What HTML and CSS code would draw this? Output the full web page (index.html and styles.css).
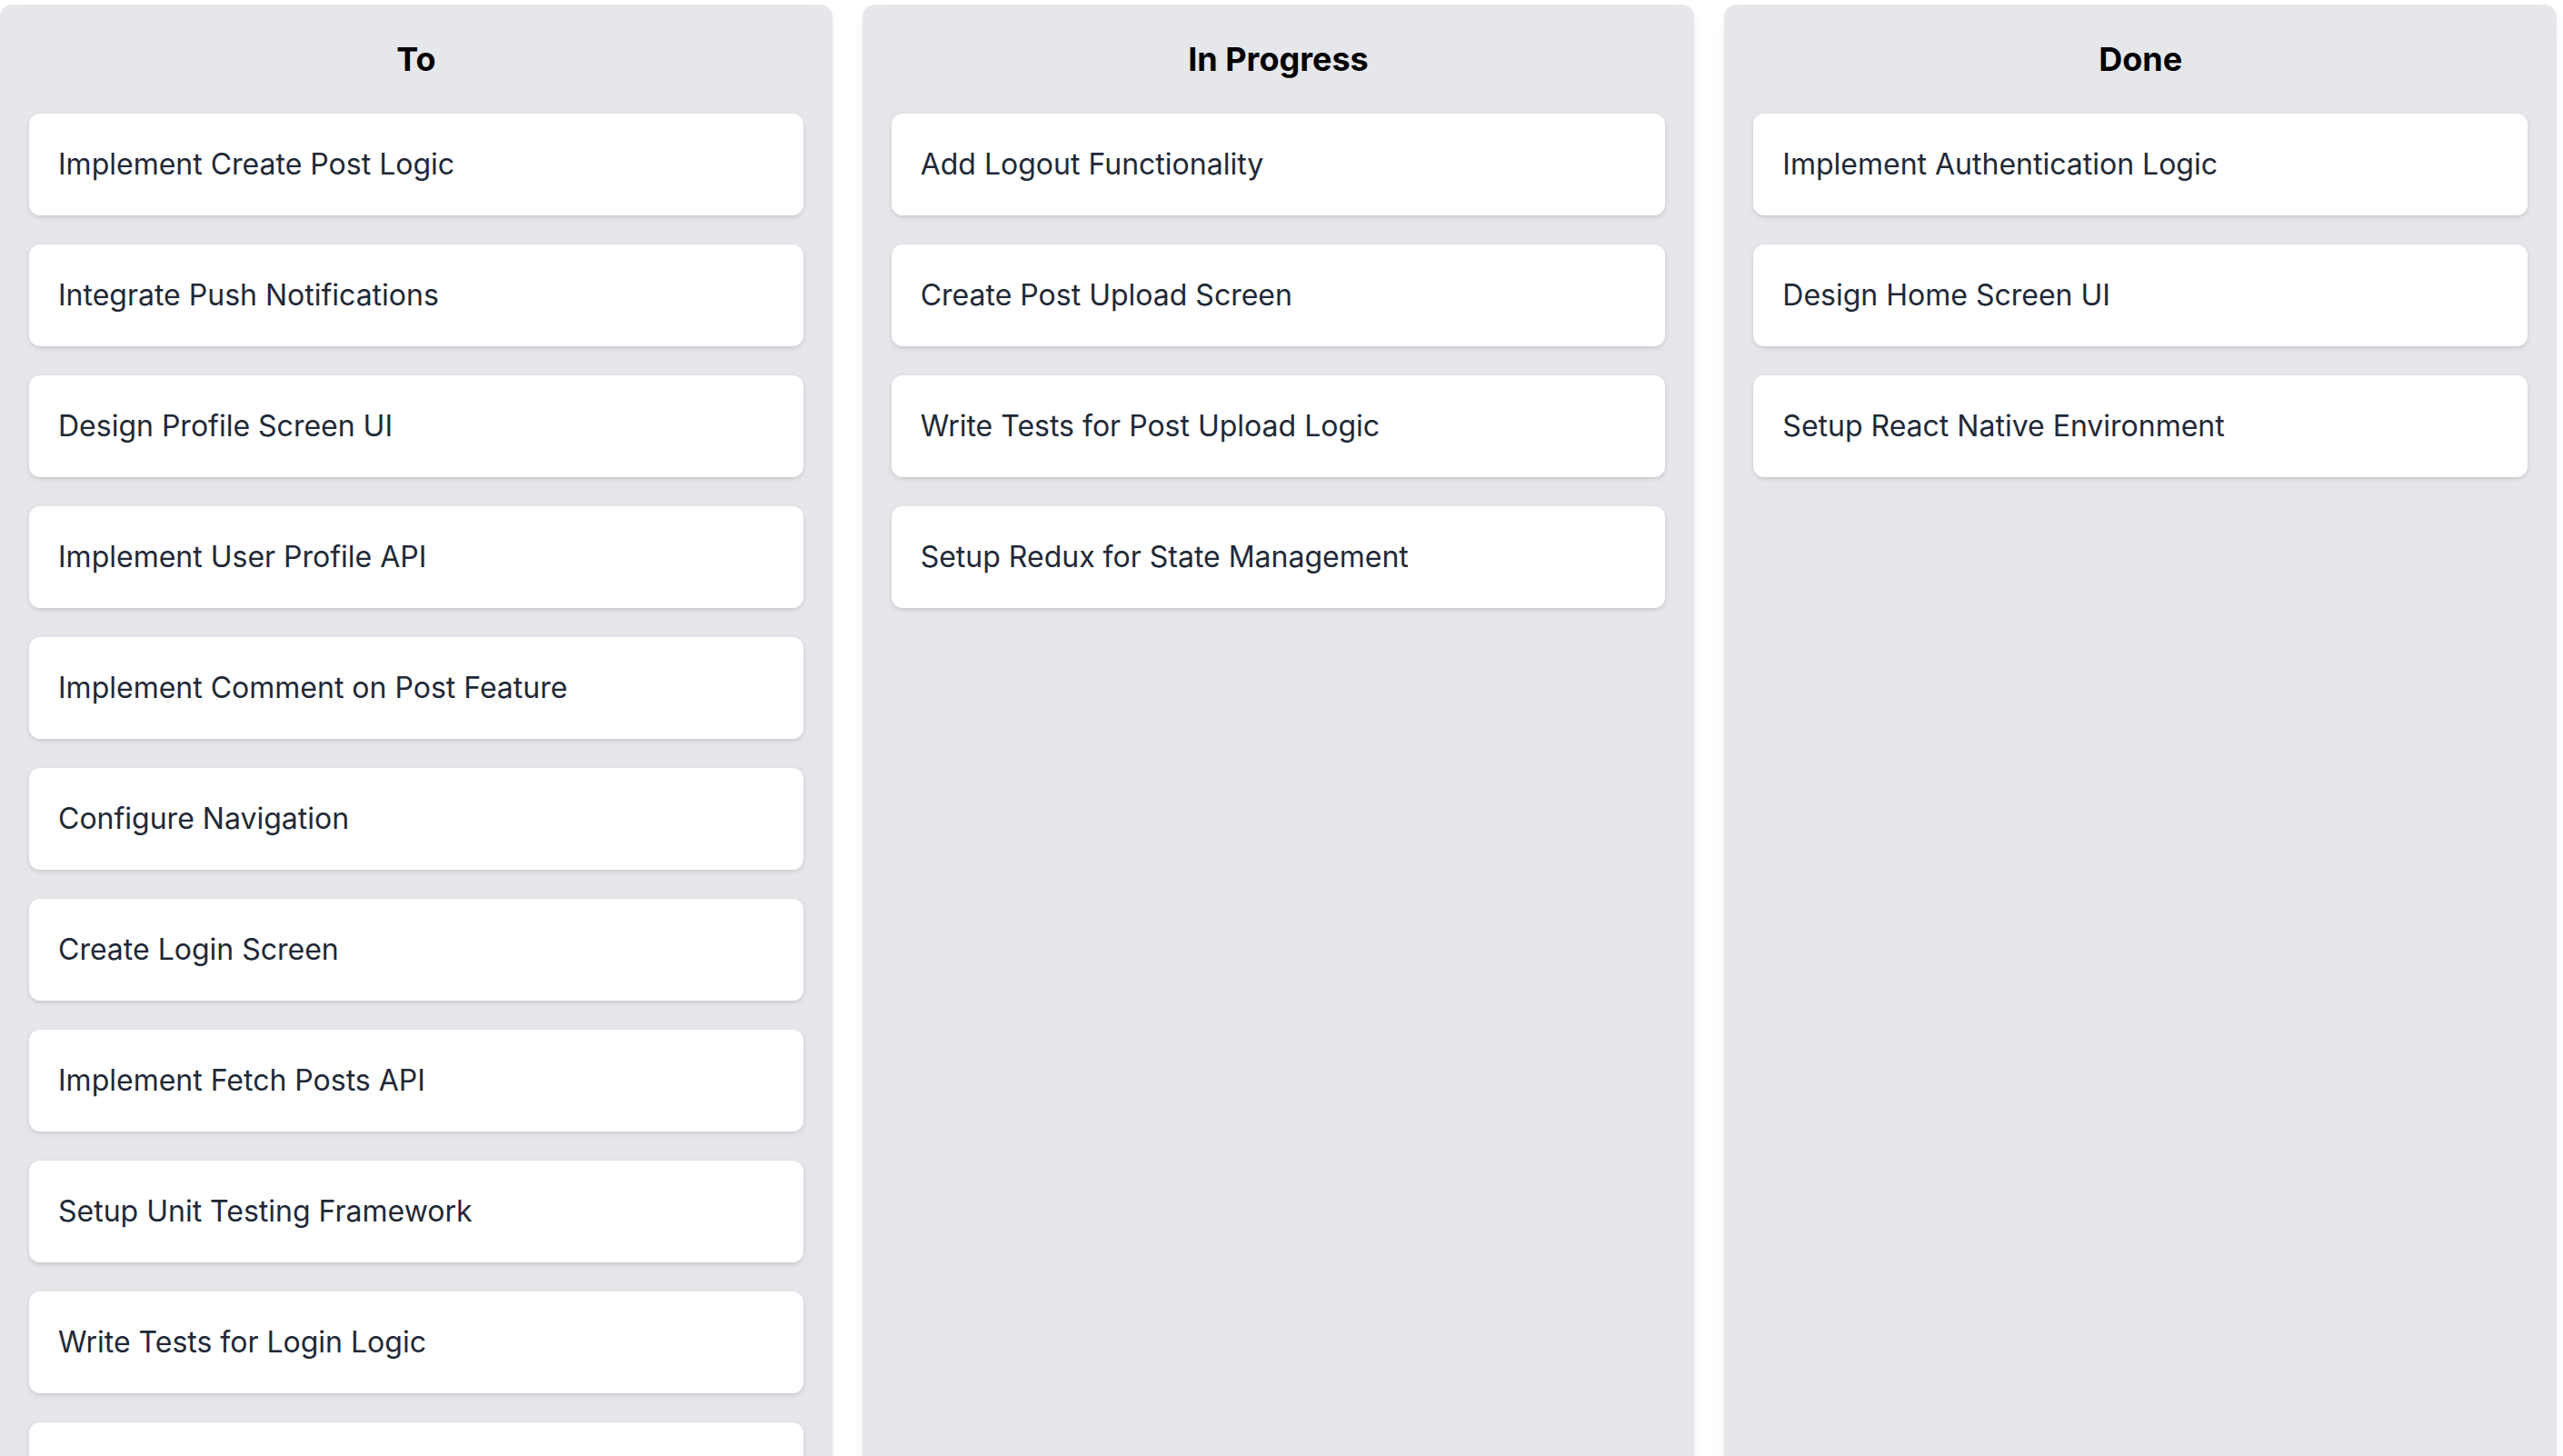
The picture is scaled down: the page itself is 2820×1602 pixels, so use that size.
FILE: index.html
```html
<!DOCTYPE html>
<html lang="en">
<head>
<meta charset="utf-8">
<title>Board</title>
<link rel="stylesheet" href="styles.css">
</head>
<body>
<main class="board">
  <section class="column">
    <h2 class="column-title">To</h2>
    <div class="card">Implement Create Post Logic</div>
    <div class="card">Integrate Push Notifications</div>
    <div class="card">Design Profile Screen UI</div>
    <div class="card">Implement User Profile API</div>
    <div class="card">Implement Comment on Post Feature</div>
    <div class="card">Configure Navigation</div>
    <div class="card">Create Login Screen</div>
    <div class="card">Implement Fetch Posts API</div>
    <div class="card">Setup Unit Testing Framework</div>
    <div class="card">Write Tests for Login Logic</div>
    <div class="card">Implement Like Post Feature</div>
  </section>
  <section class="column">
    <h2 class="column-title">In Progress</h2>
    <div class="card">Add Logout Functionality</div>
    <div class="card">Create Post Upload Screen</div>
    <div class="card">Write Tests for Post Upload Logic</div>
    <div class="card">Setup Redux for State Management</div>
  </section>
  <section class="column">
    <h2 class="column-title">Done</h2>
    <div class="card">Implement Authentication Logic</div>
    <div class="card">Design Home Screen UI</div>
    <div class="card">Setup React Native Environment</div>
  </section>
</main>
</body>
</html>
```
FILE: styles.css
```css
html, body {
  margin: 0;
  padding: 0;
  height: 100%;
  overflow: hidden;
  background: #ffffff;
  font-family: Inter, "Noto Sans", "Liberation Sans", sans-serif;
}

.board {
  display: flex;
  align-items: stretch;
  gap: 33px;
  padding: 5px 7px 0 0;
  min-height: 100%;
  box-sizing: border-box;
}

.column {
  flex: 1 1 0;
  min-width: 0;
  background: #e5e7eb;
  border-radius: 14px;
  padding: 32px;
  box-sizing: border-box;
  display: flex;
  flex-direction: column;
  gap: 32px;
  box-shadow: 0 8px 16px -4px rgba(0, 0, 0, 0.08), 0 2px 6px -2px rgba(0, 0, 0, 0.06);
}

.column-title {
  margin: 0;
  font-size: 36px;
  line-height: 56px;
  font-weight: 700;
  color: #000000;
  text-align: center;
}

.card {
  background: #ffffff;
  border-radius: 12px;
  padding: 32px;
  font-size: 32px;
  line-height: 48px;
  color: #1f2937;
  box-shadow: 0 2px 6px 0 rgba(0, 0, 0, 0.1), 0 2px 4px -2px rgba(0, 0, 0, 0.1);
  flex: none;
}
```
